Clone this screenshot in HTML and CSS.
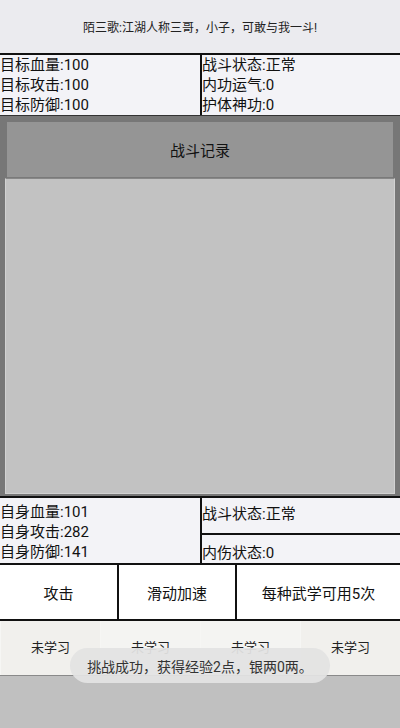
FILE: index.html
```html
<!DOCTYPE html>
<html lang="zh-CN">
<head>
  <meta charset="UTF-8">
  <meta name="viewport" content="width=device-width, initial-scale=1.0">
  <title>战斗</title>
  <link rel="stylesheet" href="styles.css">
</head>
<body>
  <div class="app">
    <div class="talk">陌三歌:江湖人称三哥，小子，可敢与我一斗!</div>

    <div class="stats target">
      <div class="col left">
        <div>目标血量:100</div>
        <div>目标攻击:100</div>
        <div>目标防御:100</div>
      </div>
      <div class="col">
        <div>战斗状态:正常</div>
        <div>内功运气:0</div>
        <div>护体神功:0</div>
      </div>
    </div>

    <div class="frame">
      <div class="frame-title">战斗记录</div>
      <div class="log"></div>
    </div>

    <div class="stats self">
      <div class="col left">
        <div>自身血量:101</div>
        <div>自身攻击:282</div>
        <div>自身防御:141</div>
      </div>
      <div class="col split">
        <div class="cell top">战斗状态:正常</div>
        <div class="cell bottom">内伤状态:0</div>
      </div>
    </div>

    <div class="actions">
      <button class="btn b1">攻击</button>
      <button class="btn b2">滑动加速</button>
      <button class="btn b3">每种武学可用5次</button>
    </div>

    <div class="skills">
      <div class="skill">未学习</div>
      <div class="skill alt">未学习</div>
      <div class="skill alt">未学习</div>
      <div class="skill">未学习</div>
    </div>

    <div class="rest"></div>

    <div class="toast">挑战成功，获得经验2点，银两0两。</div>
  </div>
</body>
</html>
```

FILE: styles.css
```css
body {
  margin: 0;
  font-family: Roboto, "Noto Sans CJK SC", sans-serif;
  color: #111;
  background: #c0c0c0;
}
.app {
  position: relative;
  width: 400px;
  height: 728px;
  overflow: hidden;
  display: flex;
  flex-direction: column;
}
.talk {
  height: 53px;
  background: #ebebef;
  display: flex;
  align-items: center;
  justify-content: center;
  font-size: 12px;
  color: #222;
}
.stats {
  display: flex;
  background: #f3f3f7;
  border-top: 2px solid #111;
  font-size: 15px;
  line-height: 20px;
}
.stats .col { flex: 1; }
.stats .left {
  width: 200px;
  flex: none;
  border-right: 2px solid #111;
}
.target { height: 60px; border-bottom: 1px solid #333; }

.frame {
  height: 380px;
  background: #777;
  display: flex;
  flex-direction: column;
  padding: 6px 5px 2px;
  box-sizing: border-box;
}
.frame-title {
  height: 55px;
  margin: 0 2px;
  background: #959595;
  border-bottom: 1px solid #7a7a7a;
  display: flex;
  align-items: center;
  justify-content: center;
  font-size: 15px;
  color: #111;
}
.log {
  flex: 1;
  background: #c2c2c2;
  border: 1px solid #d2d2d2;
  border-top-color: #888;
}

.self { height: 65px; }
.self .left { padding-top: 4px; }
.self .split { display: flex; flex-direction: column; }
.self .cell { flex: 1; display: flex; }
.self .top {
  align-items: flex-start;
  padding-top: 6px;
  border-bottom: 2px solid #111;
}
.self .bottom { align-items: flex-end; padding-bottom: 0; }

.actions {
  display: flex;
  height: 54px;
  border-top: 2px solid #111;
  border-bottom: 2px solid #111;
  background: #fff;
}
.btn {
  border: none;
  background: #fff;
  font-family: inherit;
  font-size: 15px;
  color: #111;
  padding: 0;
  margin: 0;
}
.b1 { width: 119px; border-right: 2px solid #111; }
.b2 { width: 118px; border-right: 2px solid #111; }
.b3 { flex: 1; }

.skills {
  display: flex;
  height: 54px;
  background: #f1f0ed;
  border-bottom: 1px solid #8a8a8a;
}
.skill {
  flex: 1;
  display: flex;
  align-items: center;
  justify-content: center;
  font-size: 13px;
  color: #222;
  padding-bottom: 4px;
  border-left: 1px solid #f6f6f4;
}
.skill.alt { background: #f4f4f2; }
.rest { flex: 1; background: #c0c0c0; }

.toast {
  position: absolute;
  left: 70px;
  top: 648px;
  width: 260px;
  height: 35px;
  border-radius: 18px;
  background: rgba(226, 226, 226, 0.94);
  display: flex;
  align-items: center;
  justify-content: center;
  font-size: 14px;
  color: #333;
}
```
